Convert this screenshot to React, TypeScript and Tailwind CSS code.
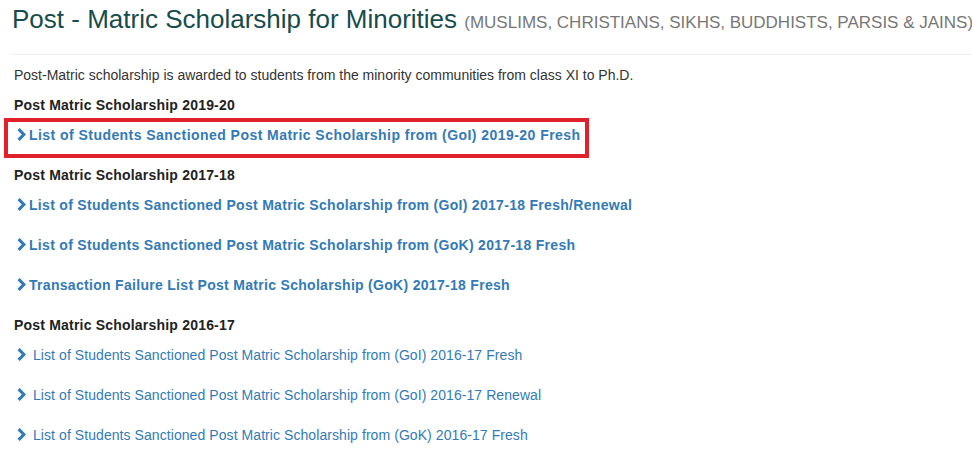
const sections = [
  {
    title: 'Post Matric Scholarship 2019-20',
    bold: true,
    links: ['List of Students Sanctioned Post Matric Scholarship from (GoI) 2019-20 Fresh'],
    highlight: 0,
  },
  {
    title: 'Post Matric Scholarship 2017-18',
    bold: true,
    links: [
      'List of Students Sanctioned Post Matric Scholarship from (GoI) 2017-18 Fresh/Renewal',
      'List of Students Sanctioned Post Matric Scholarship from (GoK) 2017-18 Fresh',
      'Transaction Failure List Post Matric Scholarship (GoK) 2017-18 Fresh',
    ],
    highlight: -1,
  },
  {
    title: 'Post Matric Scholarship 2016-17',
    bold: false,
    links: [
      'List of Students Sanctioned Post Matric Scholarship from (GoI) 2016-17 Fresh',
      'List of Students Sanctioned Post Matric Scholarship from (GoI) 2016-17 Renewal',
      'List of Students Sanctioned Post Matric Scholarship from (GoK) 2016-17 Fresh',
    ],
    highlight: -1,
  },
];

function Chevron() {
  return (
    <svg width="9" height="13" viewBox="0 0 9 13" className="shrink-0 fill-[#337ab7]">
      <polygon points="0.5,2.2 2.7,0 9,6.5 2.7,13 0.5,10.8 4.8,6.5" />
    </svg>
  );
}

export default function App() {
  return (
    <div className="min-h-screen bg-white text-[#333] font-['Liberation_Sans',Arial,sans-serif] overflow-hidden">
      {/* Page header */}
      <div className="pt-[5px] pl-3 whitespace-nowrap">
        <h1 className="text-[26px] leading-[1.1] font-normal text-[#174c4c]">
          Post - Matric Scholarship for Minorities{' '}
          <small className="text-[17px] text-[#777]">
            (MUSLIMS, CHRISTIANS, SIKHS, BUDDHISTS, PARSIS &amp; JAINS)
          </small>
        </h1>
      </div>
      <hr className="mt-5 ml-[11px] border-0 border-t border-[#eee]" />

      {/* Content */}
      <div className="pl-[14px] pt-[10px] text-[14px] leading-5">
        <p>Post-Matric scholarship is awarded to students from the minority communities from class XI to Ph.D.</p>

        {sections.map((s) => (
          <div key={s.title} className="mt-[10px]">
            <h4 className="font-bold tracking-[0.2px] text-[#222]">{s.title}</h4>
            <ul>
              {s.links.map((l, i) => (
                <li key={l} className="relative py-[10px]">
                  <a
                    href="#"
                    className={
                      'flex items-center pl-[3px] text-[#337ab7] ' +
                      (s.bold
                        ? s.highlight === i
                          ? 'font-bold tracking-[0.45px]'
                          : 'font-bold tracking-[0.3px]'
                        : 'gap-[7px] tracking-[0.07px]')
                    }
                  >
                    <Chevron />
                    <span className={s.bold ? 'ml-[3px]' : ''}>{l}</span>
                  </a>
                  {s.highlight === i && (
                    <div className="absolute top-[3px] -left-[10px] w-[585px] h-10 border-4 border-[#e0202a]" />
                  )}
                </li>
              ))}
            </ul>
          </div>
        ))}
      </div>
    </div>
  );
}
